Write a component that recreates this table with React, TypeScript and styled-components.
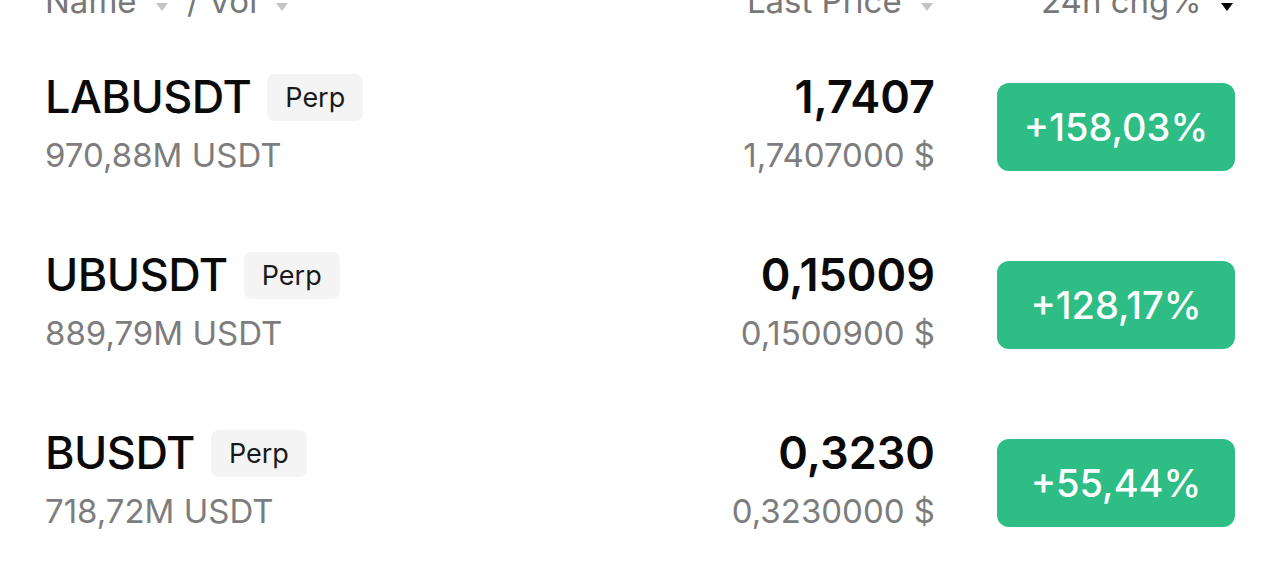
import React from 'react';
import styled, { createGlobalStyle } from 'styled-components';

const GlobalStyle = createGlobalStyle`
  html, body {
    margin: 0;
    padding: 0;
    background: #ffffff;
    overflow: hidden;
  }
  body {
    font-family: Inter, 'Noto Sans', sans-serif;
  }
`;

const markets = [
  { symbol: 'LABUSDT', vol: '970,88M USDT', price: '1,7407', usd: '1,7407000 $', change: '+158,03%' },
  { symbol: 'UBUSDT', vol: '889,79M USDT', price: '0,15009', usd: '0,1500900 $', change: '+128,17%' },
  { symbol: 'BUSDT', vol: '718,72M USDT', price: '0,3230', usd: '0,3230000 $', change: '+55,44%' },
];

const SortIcon: React.FC<{ active?: boolean }> = ({ active }) => (
  <SortSvg width="16" height="26" viewBox="0 0 16 26">
    <path d="M2 11 L8 3 L14 11 Z" fill="#c4c4c4" />
    <path d="M2 15 L14 15 L8 23 Z" fill={active ? '#000000' : '#c4c4c4'} />
  </SortSvg>
);

const App: React.FC = () => {
  return (
    <>
      <GlobalStyle />
      <Page>
        <Header>
          <HeadCell>
            Name <SortIcon /> / Vol <SortIcon />
          </HeadCell>
          <HeadRight>
            <HeadCell>
              Last Price <SortIcon />
            </HeadCell>
            <ChangeHead>
              24h chg% <SortIcon active />
            </ChangeHead>
          </HeadRight>
        </Header>
        <List>
          {markets.map((m) => (
            <Row key={m.symbol}>
              <Info>
                <NameLine>
                  <Symbol>{m.symbol}</Symbol>
                  <Tag>Perp</Tag>
                </NameLine>
                <Volume>{m.vol}</Volume>
              </Info>
              <PriceBlock>
                <Price>{m.price}</Price>
                <UsdPrice>{m.usd}</UsdPrice>
              </PriceBlock>
              <Change>{m.change}</Change>
            </Row>
          ))}
        </List>
      </Page>
    </>
  );
};

export default App;

const Page = styled.div`
  width: 1280px;
  height: 579px;
  padding: 0 45px 0 45px;
  box-sizing: border-box;
  overflow: hidden;
`;

const Header = styled.div`
  display: flex;
  justify-content: space-between;
  align-items: center;
  margin-top: -21px;
  height: 44px;
`;

const HeadRight = styled.div`
  display: flex;
  align-items: center;
`;

const HeadCell = styled.div`
  display: flex;
  align-items: center;
  gap: 8px;
  font-size: 33px;
  color: #787878;
  white-space: pre;
`;

const ChangeHead = styled(HeadCell)`
  width: 238px;
  margin-left: 62px;
  justify-content: flex-end;
`;

const SortSvg = styled.svg`
  flex-shrink: 0;
`;

const List = styled.div`
  display: flex;
  flex-direction: column;
  margin-top: 15px;
`;

const Row = styled.div`
  display: flex;
  align-items: center;
  height: 178px;
`;

const Info = styled.div`
  flex: 1;
  display: flex;
  flex-direction: column;
`;

const NameLine = styled.div`
  display: flex;
  align-items: center;
  gap: 16px;
`;

const Symbol = styled.div`
  font-size: 45px;
  font-weight: 500;
  line-height: 56px;
  color: #0a0a0a;
  letter-spacing: -0.5px;
`;

const Tag = styled.div`
  background: #f4f4f4;
  border-radius: 8px;
  padding: 0 18px;
  height: 47px;
  display: flex;
  align-items: center;
  font-size: 27px;
  color: #1a1a1a;
`;

const Volume = styled.div`
  font-size: 33px;
  line-height: 60px;
  color: #7d7d7d;
`;

const PriceBlock = styled.div`
  display: flex;
  flex-direction: column;
  align-items: flex-end;
`;

const Price = styled.div`
  font-size: 45px;
  font-weight: 600;
  line-height: 56px;
  color: #0a0a0a;
`;

const UsdPrice = styled.div`
  font-size: 33px;
  line-height: 60px;
  color: #7d7d7d;
`;

const Change = styled.div`
  width: 238px;
  height: 88px;
  margin-left: 62px;
  border-radius: 12px;
  background: #2ebd85;
  color: #ffffff;
  font-size: 38px;
  font-weight: 500;
  display: flex;
  align-items: center;
  justify-content: center;
`;
